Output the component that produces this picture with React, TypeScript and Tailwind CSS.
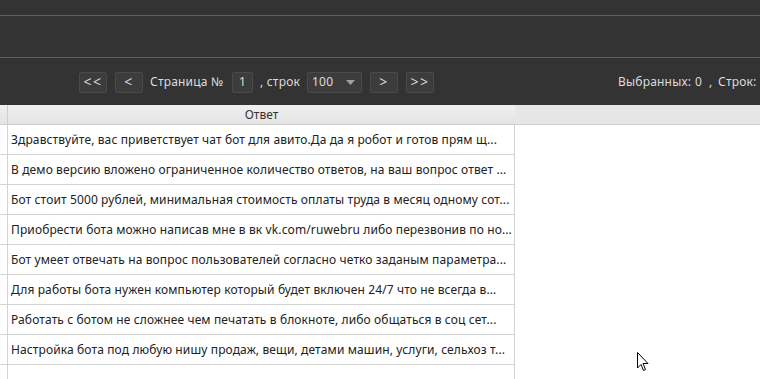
import React from "react";

const rows: string[] = [
  "Здравствуйте, вас приветствует чат бот для авито.Да да я робот и готов прям щ...",
  "В демо версию вложено ограниченное количество ответов, на ваш вопрос ответ ...",
  "Бот стоит 5000 рублей, минимальная стоимость оплаты труда в месяц одному сот...",
  "Приобрести бота можно написав мне в вк vk.com/ruwebru либо перезвонив по но...",
  "Бот умеет отвечать на вопрос пользователей согласно четко заданым параметра...",
  "Для работы бота нужен компьютер который будет включен 24/7 что не всегда в...",
  "Работать с ботом не сложнее чем печатать в блокноте, либо общаться в соц сет...",
  "Настройка бота под любую нишу продаж, вещи, детами машин, услуги, сельхоз т...",
];

const NavButton: React.FC<{ label: string }> = ({ label }) => (
  <button className="w-[28px] h-[21px] shrink-0 flex items-center justify-center rounded-[2px] border border-[#4a4a4a] bg-[#3c3c3c] text-[#d8d8d8] text-[14px] tracking-[1.5px] leading-none">
    {label}
  </button>
);

const App: React.FC = () => {
  return (
    <div
      className="relative w-[760px] h-[379px] overflow-hidden bg-white"
      style={{ fontFamily: '"Noto Sans", Tahoma, sans-serif' }}
    >
      <div className="bg-[#333333]">
        <div className="h-[16px] border-b border-[#5f5f5f]" />
        <div className="h-[42px] border-b border-[#5f5f5f]" />
        <div className="h-[47px] flex items-center pl-[79px] pt-[1px] text-[12px] tracking-[0.2px] text-[#dcdcdc] whitespace-nowrap">
          <div className="flex items-center gap-[8px]">
            <NavButton label="<<" />
            <NavButton label="<" />
          </div>
          <span className="ml-[7px] w-[82px] shrink-0">Страница №</span>
          <div className="w-[21px] h-[21px] shrink-0 flex items-center justify-center rounded-[2px] border border-[#4a4a4a] bg-[#3c3c3c]">
            1
          </div>
          <span className="ml-[7px] w-[47px] shrink-0">, строк</span>
          <div className="w-[55px] h-[21px] shrink-0 flex items-center justify-between pl-[4px] pr-[6px] rounded-[2px] border border-[#4a4a4a] bg-[#3c3c3c]">
            <span>100</span>
            <svg width="9" height="5" viewBox="0 0 9 5">
              <path d="M0 0 H9 L4.5 5 Z" fill="#a0a0a0" />
            </svg>
          </div>
          <div className="ml-[8px] flex items-center gap-[8px]">
            <NavButton label=">" />
            <NavButton label=">>" />
          </div>
          <div className="ml-[184px] flex shrink-0">
            <span className="w-[77px]">Выбранных:</span>
            <span className="w-[14px]">0</span>
            <span className="w-[9px]">,</span>
            <span>Строк:</span>
          </div>
        </div>
      </div>

      <div className="flex h-[20px] border-b border-[#cfcfcf]">
        <div className="w-[8px] border-r border-[#d0d0d0] bg-gradient-to-b from-[#f0f0f0] to-[#e3e3e3]" />
        <div className="w-[507px] flex items-center justify-center text-[12px] text-[#333] bg-gradient-to-b from-[#f0f0f0] to-[#e3e3e3]">
          Ответ
        </div>
        <div className="flex-1 bg-[#e6e6e6]" />
      </div>

      <div className="w-[515px]">
        {rows.map((text, i) => (
          <div key={i} className="flex h-[30px] border-b border-[#d4d4d4]">
            <div className="w-[8px] border-r border-[#d4d4d4]" />
            <div className="w-[507px] border-r border-[#d4d4d4] flex items-center pl-[3px] text-[12px] tracking-[0.12px] text-[#222] whitespace-nowrap overflow-hidden">
              {text}
            </div>
          </div>
        ))}
        <div className="flex h-[30px]">
          <div className="w-[8px] border-r border-[#d4d4d4]" />
          <div className="w-[507px] border-r border-[#d4d4d4]" />
        </div>
      </div>

      <svg className="absolute left-[637px] top-[352px]" width="12" height="20" viewBox="0 0 12 20">
        <path
          d="M0.5 0.5 V16 L4 12.5 L6.5 18.5 L8.5 17.5 L6 11.5 H11 Z"
          fill="#fff"
          stroke="#000"
          strokeWidth="1"
        />
      </svg>
    </div>
  );
};

export default App;
